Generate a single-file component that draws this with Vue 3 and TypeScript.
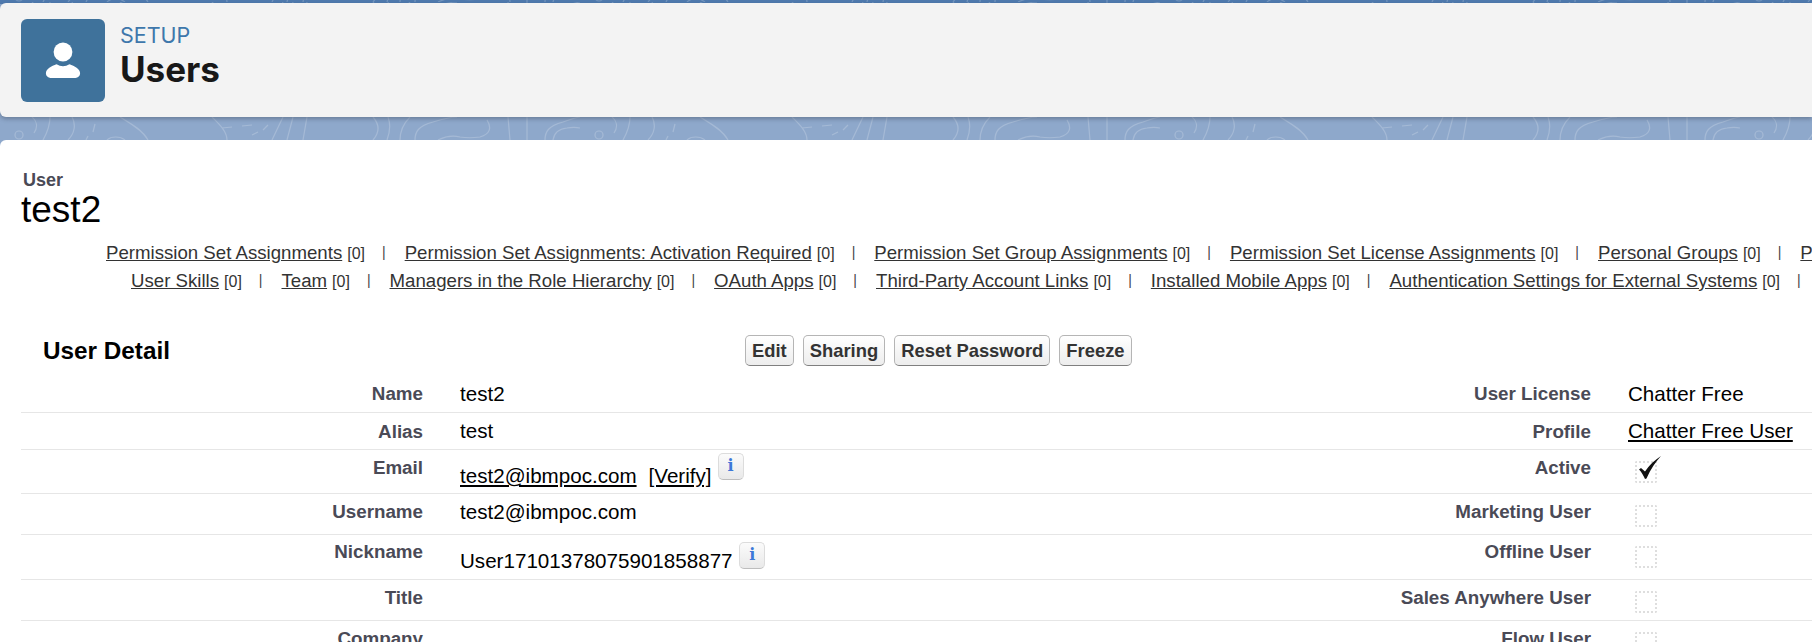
<script setup lang="ts">
type RelatedLink = { label: string; count: number };

const firstLine: RelatedLink[] = [
  { label: "Permission Set Assignments", count: 0 },
  { label: "Permission Set Assignments: Activation Required", count: 0 },
  { label: "Permission Set Group Assignments", count: 0 },
  { label: "Permission Set License Assignments", count: 0 },
  { label: "Personal Groups", count: 0 },
  { label: "Public Group Membership", count: 0 },
];

const secondLine: RelatedLink[] = [
  { label: "User Skills", count: 0 },
  { label: "Team", count: 0 },
  { label: "Managers in the Role Hierarchy", count: 0 },
  { label: "OAuth Apps", count: 0 },
  { label: "Third-Party Account Links", count: 0 },
  { label: "Installed Mobile Apps", count: 0 },
  { label: "Authentication Settings for External Systems", count: 0 },
];

const buttons = ["Edit", "Sharing", "Reset Password", "Freeze"];
</script>

<template>
  <div class="page">
    <svg class="pattern" width="1812" height="140" viewBox="0 0 1812 140" fill="none">
      <defs>
        <pattern id="contours" x="0" y="117" width="580" height="23" patternUnits="userSpaceOnUse">
          <g fill="none" stroke="#fff" stroke-opacity="0.2" stroke-width="1.2">
            <circle cx="19" cy="18" r="4" />
            <path d="M32 0c5 4 6 10 2 16" />
            <path d="M50 0c0 8-3 16-7 23" />
            <path d="M72 0c4 7 3 16-4 23" />
            <path d="M95 7l-2 8M88 19l-2 4" />
            <path d="M120 0c8 5 22 12 28 23" />
            <path d="M107 23c4-4 13-4 18 0" />
            <path d="M212 0c6 6 15 14 15 23M222 11l10-1" />
            <path d="M242 9l10-1M263 13l5-5M252 18l6-3" />
            <path d="M283 0l-11 23M293 0l-6 23M307 0l-4 23" />
            <path d="M373 0c7 8 7 15 0 23" />
            <path d="M388 0c3 8 2 15-1 23" />
            <path d="M410 0c-6 6-10 14-10 23" />
            <path d="M415 23c0-8 3-14 18-18 10-3 18-5 24-5" />
            <path d="M487 3c5 8 3 14-7 17-7 1-14 1-20 0-8-2-16 0-22 3" />
            <path d="M508 0l2 23M527 0v23" />
            <path d="M545 23c0-8 3-14 18-18 6-2 11-4 17-5" />
            <path d="M553 23c1-7 5-11 14-12 5-1 9-1 13 0" />
          </g>
        </pattern>
      </defs>
      <rect x="0" y="117" width="1812" height="23" fill="url(#contours)" />
      <rect x="0" y="0" width="1812" height="4" fill="url(#contours)" />
    </svg>

    <header class="page-header">
      <div class="header-icon">
        <svg width="84" height="83" viewBox="0 0 84 83">
          <circle cx="42" cy="33" r="9.4" fill="#fff" />
          <path
            d="M29.5 59a4.7 4.7 0 0 1-4.6-4.6c0-4.5 5.7-7.4 10.600-9.100a13 13 0 0 0 13 0c4.900 1.700 10.600 4.600 10.600 9.100a4.700 4.700 0 0 1-4.600 4.600z"
            fill="#fff"
          />
        </svg>
      </div>
      <div class="header-text">
        <div class="header-kicker">SETUP</div>
        <h1 class="header-title">Users</h1>
      </div>
    </header>

    <main class="content">
      <div class="record-type">User</div>
      <div class="record-name">test2</div>

      <div class="related-links">
        <div class="link-line">
          <span v-for="(item, i) in firstLine" :key="item.label" class="link-item">
            <span v-if="i > 0" class="sep">|</span>
            <a class="link" href="#">{{ item.label }}</a>
            <span class="count">[{{ item.count }}]</span>
          </span>
        </div>
        <div class="link-line link-line-second">
          <span v-for="(item, i) in secondLine" :key="item.label" class="link-item">
            <span v-if="i > 0" class="sep">|</span>
            <a class="link" href="#">{{ item.label }}</a>
            <span class="count">[{{ item.count }}]</span>
          </span>
          <span class="sep">|</span>
        </div>
      </div>

      <section class="detail">
        <div class="detail-head">
          <h2 class="detail-title">User Detail</h2>
          <div class="detail-buttons">
            <button v-for="label in buttons" :key="label" type="button" class="btn">{{ label }}</button>
          </div>
        </div>

        <div class="row row-name">
          <div class="label">Name</div>
          <div class="value">test2</div>
          <div class="label">User License</div>
          <div class="value">Chatter Free</div>
        </div>
        <div class="row row-alias">
          <div class="label">Alias</div>
          <div class="value">test</div>
          <div class="label">Profile</div>
          <div class="value"><a class="value-link" href="#">Chatter Free User</a></div>
        </div>
        <div class="row row-email">
          <div class="label">Email</div>
          <div class="value value-info">
            <a class="value-link" href="#">test2@ibmpoc.com</a>
            <a class="value-link verify" href="#">[Verify]</a>
            <span class="info">i</span>
          </div>
          <div class="label">Active</div>
          <div class="check-cell">
            <span class="check-box">
              <svg class="tick" width="28" height="26" viewBox="0 0 28 26">
                <path d="M4 14.500l2-1.500 4 3.500C14 10 20 5 26 1c-5 5.500-10.500 13-14.500 22.500l-1.500.5C8.500 20.500 6.500 17 4 14.500z" fill="#111" />
              </svg>
            </span>
          </div>
        </div>
        <div class="row row-username">
          <div class="label">Username</div>
          <div class="value">test2@ibmpoc.com</div>
          <div class="label">Marketing User</div>
          <div class="check-cell"><span class="check-box"></span></div>
        </div>
        <div class="row row-nickname">
          <div class="label">Nickname</div>
          <div class="value value-info">
            User17101378075901858877
            <span class="info info-tight">i</span>
          </div>
          <div class="label">Offline User</div>
          <div class="check-cell"><span class="check-box"></span></div>
        </div>
        <div class="row row-title">
          <div class="label">Title</div>
          <div class="value"></div>
          <div class="label">Sales Anywhere User</div>
          <div class="check-cell"><span class="check-box"></span></div>
        </div>
        <div class="row row-company">
          <div class="label">Company</div>
          <div class="value"></div>
          <div class="label">Flow User</div>
          <div class="check-cell"><span class="check-box"></span></div>
        </div>
      </section>
    </main>
  </div>
</template>

<style>
html,
body {
  margin: 0;
  height: 642px;
  overflow: hidden;
  background: #fff;
}
</style>

<style scoped>
.page {
  position: relative;
  width: 1812px;
  height: 642px;
  overflow: hidden;
  padding-top: 3px;
  box-sizing: border-box;
  background: linear-gradient(#4f7aae 0, #4f7aae 4px, #8ea8cb 4px);
  font-family: "Liberation Sans", Arial, sans-serif;
}

.pattern {
  position: absolute;
  top: 0;
  left: 0;
}

.page-header {
  position: relative;
  display: flex;
  gap: 15px;
  height: 114px;
  box-sizing: border-box;
  padding: 16px 0 0 21px;
  background: #f3f3f3;
  border-radius: 6px 0 0 6px;
  box-shadow: 0 2px 4px rgba(50, 60, 80, 0.4);
}

.header-icon {
  width: 84px;
  height: 83px;
  border-radius: 6px;
  background: #3f729b;
}

.header-kicker {
  margin-top: 4px;
  font-family: Inter, sans-serif;
  font-size: 21.500px;
  line-height: 24px;
  color: #3e77ab;
}

.header-title {
  margin: 1px 0 0;
  font-family: Inter, sans-serif;
  font-size: 35px;
  line-height: 42px;
  font-weight: 700;
  color: #181818;
}

.content {
  position: relative;
  margin-top: 23px;
  height: 520px;
  background: #fff;
  border-radius: 6px 0 0 0;
  padding-top: 30px;
  box-sizing: border-box;
}

.record-type {
  margin-left: 23px;
  font-size: 18px;
  line-height: 20px;
  font-weight: 700;
  color: #4a4a56;
}

.record-name {
  margin-left: 21px;
  font-size: 37px;
  line-height: 40px;
  color: #000;
}

.related-links {
  margin-top: 9px;
  padding-left: 106px;
  white-space: nowrap;
  color: #333;
}

.link-line {
  height: 28px;
  line-height: 28px;
}

.link-line-second {
  padding-left: 25px;
}

.link {
  font-size: 18.650px;
  color: #333;
  text-decoration: underline;
}

.count {
  margin-left: 5px;
  font-size: 16px;
  color: #333;
}

.sep {
  margin: 0 19px 0 17px;
  font-size: 14px;
  color: #444;
  position: relative;
  top: -2px;
}

.detail-head {
  display: grid;
  grid-template-columns: 702px 1fr;
  align-items: center;
  height: 31px;
  margin-top: 40px;
}

.detail-title {
  margin: 0 0 0 43px;
  font-size: 24.300px;
  font-weight: 700;
  color: #000;
}

.detail-buttons {
  display: flex;
  gap: 9px;
  margin-left: 43px;
}

.btn {
  min-width: 47.500px;
  height: 31px;
  padding: 0 6px;
  border: 1px solid #b5b5b5;
  border-bottom-color: #7f7f7f;
  border-radius: 5px;
  background: linear-gradient(#fff, #ededed);
  font-family: inherit;
  font-size: 18.400px;
  font-weight: 700;
  color: #333;
}

.row {
  display: grid;
  grid-template-columns: 402px 703px 391px 1fr;
  column-gap: 37px;
  margin-left: 21px;
  box-sizing: border-box;
  border-bottom: 1px solid #e6e6e6;
}

.row-name {
  height: 38px;
  margin-top: 9px;
}
.row-alias {
  height: 37px;
}
.row-email {
  height: 44px;
}
.row-username {
  height: 41px;
}
.row-nickname {
  height: 45px;
}
.row-title {
  height: 41px;
}
.row-company {
  height: 41px;
  border-bottom: 0;
}

.label {
  padding-top: 7px;
  font-size: 18.800px;
  line-height: 21px;
  font-weight: 700;
  color: #4a4a56;
  text-align: right;
}

.row-name .label,
.row-alias .label {
  padding-top: 8px;
}

.row-nickname .label {
  padding-top: 6px;
}

.value {
  padding-top: 7px;
  font-size: 20.600px;
  line-height: 24px;
  color: #000;
}

.row-alias .value,
.row-username .value {
  padding-top: 6px;
}

.row-email .value-info,
.row-nickname .value-info {
  padding-top: 14px;
  position: relative;
}

.value-link {
  color: #000;
  text-decoration: underline;
}

.verify {
  margin-left: 12px;
}

.info {
  display: inline-block;
  position: relative;
  top: -12px;
  width: 26px;
  height: 27px;
  margin-left: 6px;
  box-sizing: border-box;
  border: 1px solid #dcdcdc;
  border-bottom-color: #bdbdbd;
  border-radius: 5px;
  background: linear-gradient(#fbfbfb, #e9e9e9);
  font-family: "DejaVu Serif", serif;
  font-size: 16px;
  line-height: 23px;
  font-weight: 700;
  text-align: center;
  color: #3d78d8;
}

.info-tight {
  top: -8px;
  margin-left: 1px;
}

.check-cell {
  padding: 11px 0 0 7px;
}

.check-box {
  position: relative;
  display: block;
  width: 22px;
  height: 22px;
  box-sizing: border-box;
  border: 2px dotted #dedede;
  border-radius: 2px;
}

.tick {
  position: absolute;
  left: -2px;
  top: -8px;
}
</style>
